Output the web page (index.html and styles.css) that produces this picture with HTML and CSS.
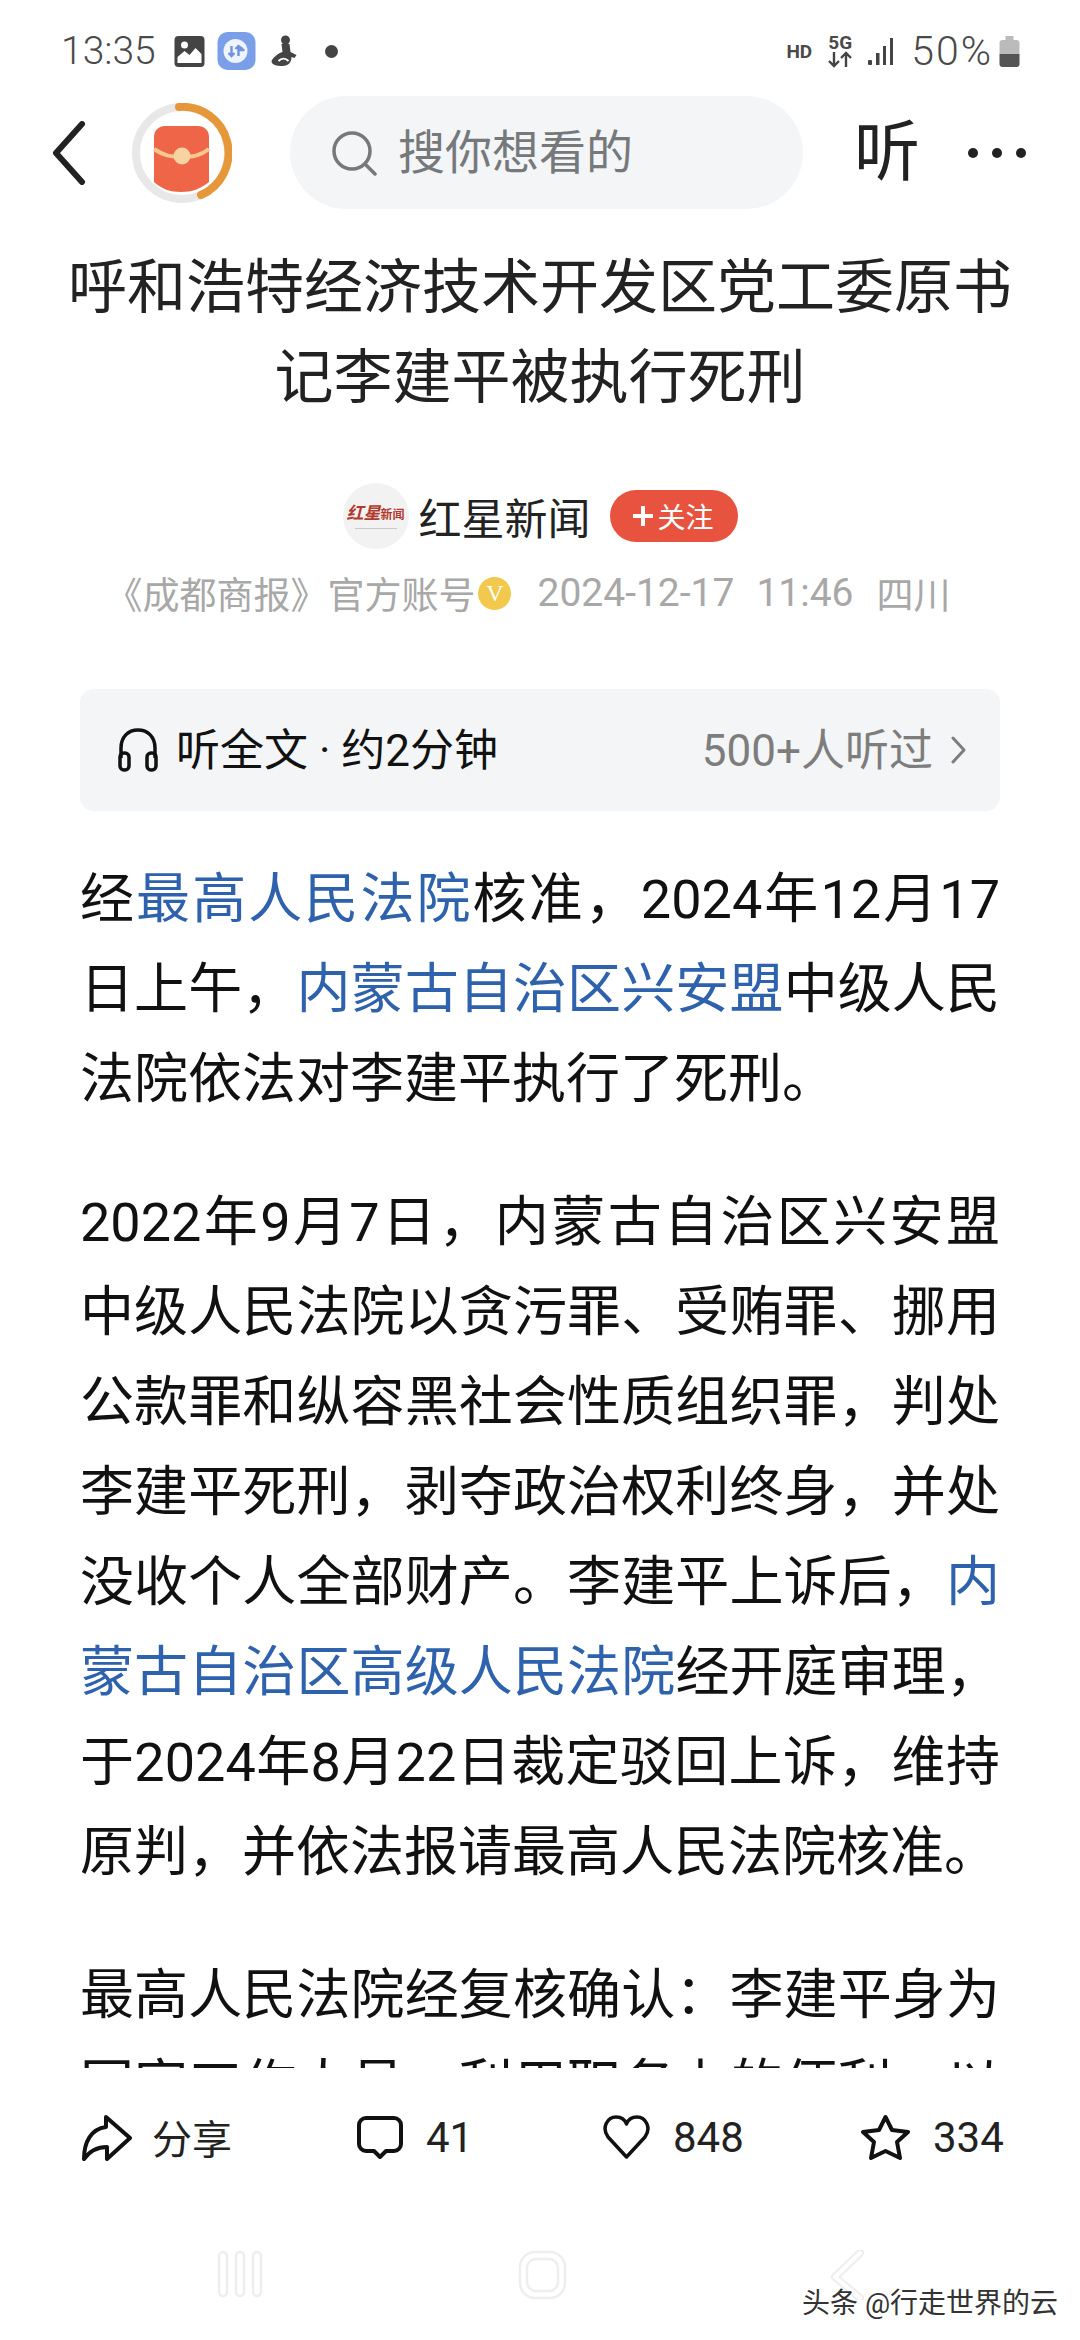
FILE: index.html
```html
<!DOCTYPE html>
<html lang="zh-CN">
<head>
<meta charset="utf-8">
<title>呼和浩特经济技术开发区党工委原书记李建平被执行死刑</title>
<link rel="stylesheet" href="styles.css">
</head>
<body>
<div class="page">
  <header class="status">
    <div class="status-left">
      <span class="time">13:35</span>
      <svg class="ic-photo" width="31" height="31" viewBox="0 0 30 31"><rect width="30" height="31" rx="4" fill="#444"/><path d="M3 27V21L10 15L15 19L21 12L27 18V27Z" fill="#fff"/><circle cx="10" cy="9" r="3.5" fill="#fff"/></svg>
      <svg class="ic-sync" width="39" height="38" viewBox="0 0 38 38"><rect width="38" height="38" rx="10" fill="#7a9ee8"/><circle cx="18" cy="19" r="12" fill="#eef3fc"/><path d="M14 14V24M11 21L14 24L17 21M21 24V14M18 17L21 14L25 17M21 18H27" fill="none" stroke="#6f93df" stroke-width="2.4"/></svg>
      <svg class="ic-fig" width="28" height="32" viewBox="0 0 27 32"><circle cx="15" cy="5" r="4.5" fill="#444"/><path d="M11 9H19L20 17L26 20L24 23L21 22C21 27 18 31 12 31C6 31 1 30 1 26C3 22 8 18 12 17Z" fill="#444"/><path d="M8 26C11 23 15 23 18 26" stroke="#fff" stroke-width="2" fill="none"/></svg>
      <span class="dot"></span>
    </div>
    <div class="status-right">
      <span class="hd">HD</span>
      <span class="net"><span class="net-t">5G</span><svg width="26" height="17" viewBox="0 0 24 17"><path d="M6 1V15M1 10L6 15L11 10M18 16V2M13 7L18 2L23 7" fill="none" stroke="#444" stroke-width="2.4"/></svg></span>
      <svg class="bars" width="29" height="29" viewBox="0 0 29 29"><g fill="#444"><rect x="0" y="23" width="4" height="5" rx="1"/><rect x="8" y="16" width="3.5" height="12"/><rect x="15" y="9" width="3" height="19"/><rect x="22" y="1" width="3" height="27"/></g></svg>
      <span class="pct">50%</span>
      <svg width="21" height="31" viewBox="0 0 20 31"><path d="M6 0H14V4H17A3 3 0 0 1 20 7V18H0V7A3 3 0 0 1 3 4H6Z" fill="#bbb"/><path d="M0 18H20V28A3 3 0 0 1 17 31H3A3 3 0 0 1 0 28Z" fill="#555"/></svg>
    </div>
  </header>

  <nav class="topbar">
    <svg class="back" width="34" height="64" viewBox="0 0 34 64"><path d="M30 3L4 32L30 61" fill="none" stroke="#222" stroke-width="6" stroke-linecap="round" stroke-linejoin="round"/></svg>
    <svg class="ring" width="100" height="100" viewBox="0 0 100 100">
      <circle cx="50" cy="50" r="46" fill="none" stroke="#e8e8e8" stroke-width="8"/>
      <path d="M47 4A46 46 0 0 1 69 92" fill="none" stroke="#e6973a" stroke-width="8" stroke-linecap="round"/>
      <path d="M22 34C22 27 27 23 33 23H66C72 23 77 27 77 34V79C68 86 60 89 49 89C38 89 30 86 22 79Z" fill="#ee6547"/>
      <path d="M22 46C32 53 40 54 50 54C60 54 68 53 77 46" fill="none" stroke="#f7c792" stroke-width="4"/>
      <circle cx="50" cy="53" r="8.5" fill="#f6d3a0"/>
    </svg>
    <div class="search">
      <svg width="46" height="46" viewBox="0 0 46 46"><circle cx="21" cy="21" r="18" fill="none" stroke="#76797b" stroke-width="3.5"/><path d="M34 34L44 44" stroke="#76797b" stroke-width="3.5" stroke-linecap="round"/></svg>
      <span class="search-t">搜你想看的</span>
    </div>
    <span class="listen">听</span>
    <span class="more"><i></i><i></i><i></i></span>
  </nav>

  <h1 class="title">呼和浩特经济技术开发区党工委原书记李建平被执行死刑</h1>

  <div class="author">
    <div class="avatar">
      <div class="av-row"><span class="av-a">红星</span><span class="av-b">新闻</span></div>
      <span class="av-line"></span>
    </div>
    <span class="name">红星新闻</span>
    <span class="follow"><svg width="20" height="20" viewBox="0 0 20 20"><path d="M10 0V20M0 10H20" stroke="#fff" stroke-width="4"/></svg>关注</span>
  </div>

  <div class="meta">
    <span>《成都商报》官方账号</span><span class="vbadge">V</span>
    <span class="date">2024-12-17</span><span class="date date-b">11:46</span><span>四川</span>
  </div>

  <div class="audio">
    <div class="audio-l">
      <svg width="40" height="44" viewBox="0 0 40 44"><path d="M3 30V20C3 9 10 2 20 2C30 2 37 9 37 20V30" fill="none" stroke="#111" stroke-width="3.5"/><rect x="2" y="25" width="9" height="17" rx="4" fill="none" stroke="#111" stroke-width="3.5"/><rect x="29" y="25" width="9" height="17" rx="4" fill="none" stroke="#111" stroke-width="3.5"/></svg>
      <span class="audio-t">听全文 · 约2分钟</span>
    </div>
    <div class="audio-r">
      <span class="audio-t">500+人听过</span>
      <svg width="15" height="28" viewBox="0 0 15 28"><path d="M2 2L13 14L2 26" fill="none" stroke="#7d7d7d" stroke-width="3" stroke-linecap="round" stroke-linejoin="round"/></svg>
    </div>
  </div>

  <article class="article">
    <p>
      <span class="ln">经<a>最高人民法院</a>核准，2024年12月17</span>
      <span class="ln">日上午，<a>内蒙古自治区兴安盟</a>中级人民</span>
      <span>法院依法对李建平执行了死刑。</span>
    </p>
    <p>
      <span class="ln">2022年9月7日，内蒙古自治区兴安盟</span>
      <span class="ln">中级人民法院以贪污罪、受贿罪、挪用</span>
      <span class="ln">公款罪和纵容黑社会性质组织罪，判处</span>
      <span class="ln">李建平死刑，剥夺政治权利终身，并处</span>
      <span class="ln">没收个人全部财产。李建平上诉后，<a>内</a></span>
      <span class="ln"><a>蒙古自治区高级人民法院</a>经开庭审理，</span>
      <span class="ln">于2024年8月22日裁定驳回上诉，维持</span>
      <span>原判，并依法报请最高人民法院核准。</span>
    </p>
    <p>
      <span class="ln">最高人民法院经复核确认：李建平身为</span>
      <span class="ln">国家工作人员，利用职务上的便利，以</span>
    </p>
  </article>

  <div class="actions">
    <div class="act">
      <svg width="51" height="47" viewBox="0 0 51 47"><path d="M25 13V3L49 24L26 45V33C15 33 8 38 3 45C3 28 10 15 25 13Z" fill="none" stroke="#111" stroke-width="4" stroke-linejoin="round"/></svg>
      <span class="act-cn">分享</span>
    </div>
    <div class="act">
      <svg width="46" height="43" viewBox="0 0 46 43"><path d="M9 2H37A7 7 0 0 1 44 9V28A7 7 0 0 1 37 35H29L23 41L17 35H9A7 7 0 0 1 2 28V9A7 7 0 0 1 9 2Z" fill="none" stroke="#111" stroke-width="4" stroke-linejoin="round"/></svg>
      <span>41</span>
    </div>
    <div class="act">
      <svg width="47" height="45" viewBox="0 0 47 45"><path d="M23.5 42L5 22C-2 12 5 2 13 2C18 2 22 5 23.5 9C25 5 29 2 34 2C42 2 49 12 42 22Z" fill="none" stroke="#111" stroke-width="3.5" stroke-linejoin="round"/></svg>
      <span>848</span>
    </div>
    <div class="act">
      <svg width="49" height="46" viewBox="0 0 49 46"><path d="M24.5 3L31 16L47 18L36 28L39 44L24.5 37L10 44L13 28L2 18L18 16Z" fill="none" stroke="#111" stroke-width="4" stroke-linejoin="round"/></svg>
      <span>334</span>
    </div>
  </div>

  <div class="sysnav">
    <svg width="46" height="48" viewBox="0 0 46 48"><g fill="#fff" stroke="#eee" stroke-width="2.5"><rect x="2" y="2" width="8" height="44" rx="4"/><rect x="19" y="2" width="8" height="44" rx="4"/><rect x="36" y="2" width="8" height="44" rx="4"/></g></svg>
    <svg width="49" height="50" viewBox="0 0 49 50"><rect x="2" y="2" width="45" height="46" rx="15" fill="none" stroke="#eee" stroke-width="2.5"/><rect x="9" y="9" width="31" height="32" rx="9" fill="none" stroke="#eee" stroke-width="2.5"/></svg>
    <svg width="34" height="50" viewBox="0 0 34 50"><path d="M30 3L5 27L30 48" fill="none" stroke="#eee" stroke-width="8" stroke-linecap="round" stroke-linejoin="round"/><path d="M30 3L5 27L30 48" fill="none" stroke="#fff" stroke-width="4" stroke-linecap="round" stroke-linejoin="round"/></svg>
    <span class="mark">头条 @行走世界的云</span>
  </div>
</div>
</body>
</html>
```
FILE: styles.css
```css
* { box-sizing: border-box; }
html, body { margin: 0; padding: 0; background: #fff; }
body { font-family: Roboto, "Noto Sans CJK SC", sans-serif; color: #111; }

.page { width: 1080px; height: 2340px; display: flex; flex-direction: column; overflow: hidden; background: #fff; }

/* status bar */
.status { height: 96px; padding: 6px 60px 0 61px; display: flex; justify-content: space-between; align-items: center; color: #4a4a4a; }
.status-left, .status-right { display: flex; align-items: center; }
.time { font-size: 39px; font-weight: 300; width: 113px; }
.ic-photo { margin-right: 12px; }
.ic-sync { margin-right: 14px; }
.ic-fig { margin-right: 27px; }
.dot { width: 13px; height: 13px; border-radius: 50%; background: #444; }
.hd { font-size: 19px; font-weight: 700; margin-right: 15px; }
.net { display: flex; flex-direction: column; align-items: center; margin-right: 15px; }
.net-t { font-size: 19px; font-weight: 700; line-height: 16px; }
.bars { margin-right: 14px; }
.pct { font-size: 41px; font-weight: 300; letter-spacing: 2px; margin-right: 6px; }

/* top bar */
.topbar { height: 113px; padding-left: 52px; display: flex; align-items: center; }
.back { margin-right: 46px; }
.ring { margin-right: 58px; }
.search { width: 513px; height: 113px; border-radius: 57px; background: #f3f5f6; padding-left: 41px; display: flex; align-items: center; gap: 21px; font-size: 47px; color: #76797b; }
.search-t { padding-bottom: 8px; }
.listen { font-size: 66px; color: #222; margin-left: 51px; line-height: 1; }
.more { display: flex; gap: 14px; margin-left: 48px; }
.more i { width: 10px; height: 10px; border-radius: 50%; background: #222; display: block; }

/* title */
.title { margin: 34px 68px 0; font-size: 59px; font-weight: 400; line-height: 90px; text-align: center; color: #222; }

/* author */
.author { margin-top: 60px; display: flex; justify-content: center; align-items: center; }
.avatar { width: 66px; height: 66px; border-radius: 50%; background: #f2f2f2; display: flex; flex-direction: column; align-items: center; justify-content: center; gap: 3px; color: #b3382e; white-space: nowrap; }
.av-row { display: flex; align-items: baseline; }
.av-a { font-size: 17px; line-height: 20px; font-weight: 700; font-style: italic; }
.av-b { font-size: 12px; line-height: 20px; font-weight: 700; }
.av-line { width: 42px; height: 1px; background: #c9c9c9; }
.name { font-size: 43px; margin: 0 19px 0 10px; color: #222; }
.follow { width: 128px; height: 52px; border-radius: 26px; background: #e8533f; color: #fff; font-size: 28px; display: flex; align-items: center; justify-content: center; gap: 4px; }

/* meta */
.meta { margin-top: 24px; height: 40px; padding-right: 24px; display: flex; justify-content: center; align-items: center; font-size: 37px; color: #a8a8a8; white-space: nowrap; }
.vbadge { width: 33px; height: 33px; border-radius: 50%; background: #f2c94c; color: #fff; font-family: "Liberation Serif", serif; font-size: 24px; line-height: 33px; text-align: center; margin: 0 26px 0 3px; }
.date { font-size: 39px; margin-right: 22px; }
.date-b { margin-right: 23px; }

/* audio card */
.audio { margin: 76px 80px 0; height: 122px; border-radius: 14px; background: #f4f5f6; padding: 0 34px 0 38px; display: flex; justify-content: space-between; align-items: center; font-size: 44px; }
.audio-t { padding-bottom: 6px; }
.audio-l { display: flex; align-items: center; gap: 18px; color: #111; }
.audio-r { display: flex; align-items: center; gap: 18px; color: #7d7d7d; }

/* article */
.article { flex: 1; min-height: 0; overflow: hidden; margin: 0 80px; padding-top: 44px; font-size: 54px; line-height: 90px; color: #111; white-space: nowrap; }
.article p { margin: 0 0 53px; }
.article p span { display: block; }
.article .ln { text-align: justify; text-align-last: justify; }
.article a { color: #2f62ad; }

/* bottom actions */
.actions { height: 138px; padding-left: 81px; display: grid; grid-template-columns: 276px 246px 258px auto; align-items: center; font-size: 42px; color: #222; }
.act { display: flex; align-items: center; gap: 23px; }
.act-cn { font-size: 40px; margin-left: -3px; }

/* system nav */
.sysnav { position: relative; height: 134px; padding: 44px 0 0 217px; display: grid; grid-template-columns: 301px 312px auto; align-items: start; }
.mark { position: absolute; left: 802px; top: 82px; font-size: 28px; line-height: 32px; color: #333; text-shadow: 1px 1px 0 #fff; white-space: nowrap; }
```
